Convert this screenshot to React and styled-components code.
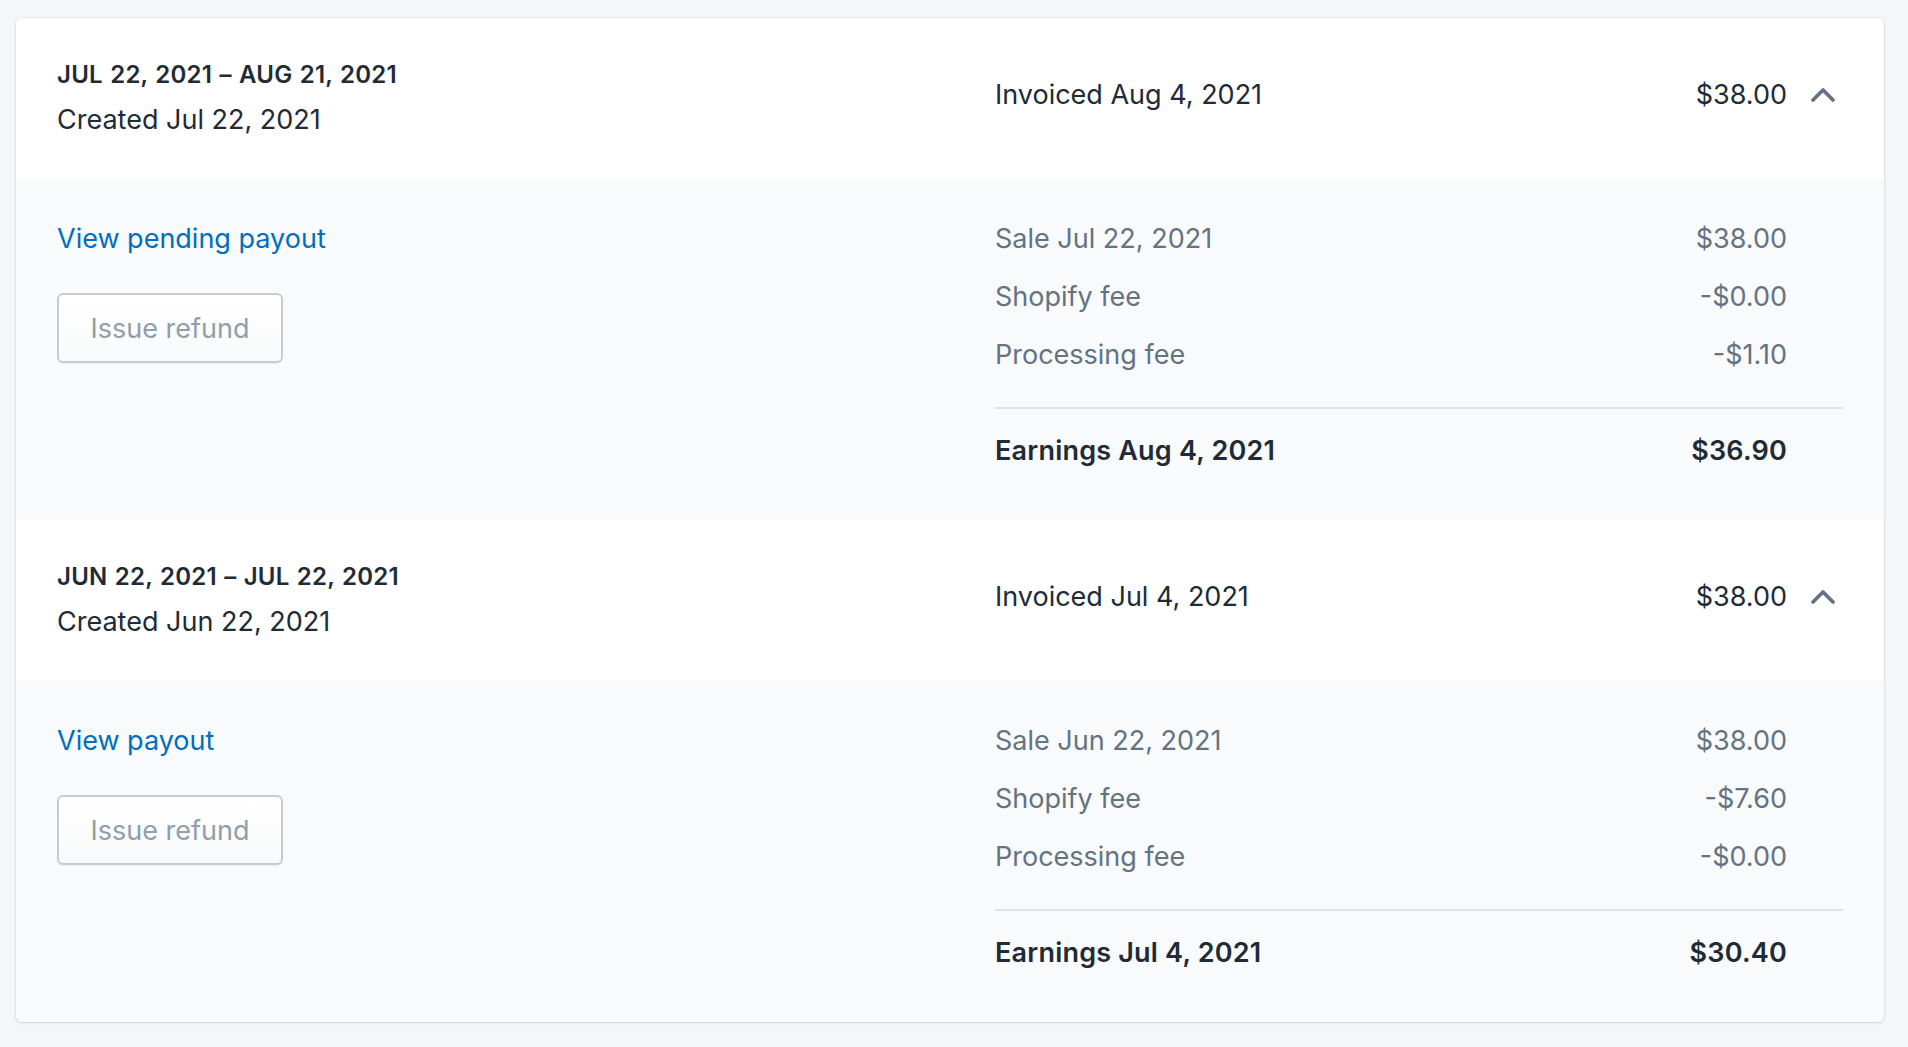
import styled, { createGlobalStyle } from "styled-components";

const GlobalStyle = createGlobalStyle`
  body {
    margin: 0;
    background: #f4f6f8;
    font-family: Inter, "Noto Sans", "Liberation Sans", sans-serif;
    color: #212b36;
  }
`;

const periods = [
  {
    range: "Jul 22, 2021 – Aug 21, 2021",
    created: "Created Jul 22, 2021",
    invoiced: "Invoiced Aug 4, 2021",
    amount: "$38.00",
    link: "View pending payout",
    lines: [
      ["Sale Jul 22, 2021", "$38.00"],
      ["Shopify fee", "-$0.00"],
      ["Processing fee", "-$1.10"],
    ],
    earnings: ["Earnings Aug 4, 2021", "$36.90"],
  },
  {
    range: "Jun 22, 2021 – Jul 22, 2021",
    created: "Created Jun 22, 2021",
    invoiced: "Invoiced Jul 4, 2021",
    amount: "$38.00",
    link: "View payout",
    lines: [
      ["Sale Jun 22, 2021", "$38.00"],
      ["Shopify fee", "-$7.60"],
      ["Processing fee", "-$0.00"],
    ],
    earnings: ["Earnings Jul 4, 2021", "$30.40"],
  },
];

const ChevronUp = () => (
  <svg width="26" height="26" viewBox="0 0 26 26" fill="none">
    <polyline
      points="3,18 13,8 23,18"
      stroke="#637381"
      strokeWidth="3.8"
      strokeLinecap="round"
      strokeLinejoin="round"
    />
  </svg>
);

const App = () => {
  return (
    <Page>
      <GlobalStyle />
      <Card>
        {periods.map((period, index) => (
          <section key={index}>
            <Header>
              <HeaderLeft>
                <RangeLabel>{period.range}</RangeLabel>
                <Created>{period.created}</Created>
              </HeaderLeft>
              <HeaderRight>
                <Invoiced>{period.invoiced}</Invoiced>
                <span>{period.amount}</span>
                <ToggleButton aria-label="Collapse">
                  <ChevronUp />
                </ToggleButton>
              </HeaderRight>
            </Header>
            <Details>
              <DetailLeft>
                <PayoutLink href="#">{period.link}</PayoutLink>
                <RefundButton disabled>Issue refund</RefundButton>
              </DetailLeft>
              <DetailRight>
                {period.lines.map(([label, value]) => (
                  <LineItem key={label}>
                    <span>{label}</span>
                    <span>{value}</span>
                  </LineItem>
                ))}
                <Divider />
                <LineItem $total>
                  <span>{period.earnings[0]}</span>
                  <span>{period.earnings[1]}</span>
                </LineItem>
              </DetailRight>
            </Details>
          </section>
        ))}
      </Card>
    </Page>
  );
};

export default App;

const Page = styled.div`
  padding: 18px 24px 25px 16px;
`;

const Card = styled.div`
  background: #fff;
  border-radius: 6px;
  overflow: hidden;
  box-shadow: 0 0 0 1px rgba(63, 63, 68, 0.05),
    0 1px 3px 0 rgba(63, 63, 68, 0.15);
`;

const Header = styled.div`
  display: grid;
  grid-template-columns: 938px 1fr;
  align-items: center;
  padding: 41px 41px 39px;
  background: #fff;
`;

const HeaderLeft = styled.div`
  display: flex;
  flex-direction: column;
`;

const RangeLabel = styled.div`
  font-size: 24px;
  line-height: 32px;
  font-weight: 600;
  text-transform: uppercase;
  letter-spacing: 0.25px;
  word-spacing: 1px;
`;

const Created = styled.div`
  margin-top: 9px;
  font-size: 27px;
  line-height: 40px;
`;

const HeaderRight = styled.div`
  display: flex;
  align-items: center;
  font-size: 27px;
  line-height: 38px;
  margin-top: -9px;
`;

const Invoiced = styled.span`
  flex: 1;
`;

const ToggleButton = styled.button`
  width: 40px;
  height: 40px;
  margin-left: 16px;
  padding: 0;
  border: 0;
  background: none;
  display: flex;
  align-items: center;
  justify-content: center;
  cursor: pointer;
`;

const Details = styled.div`
  display: grid;
  grid-template-columns: 938px 1fr;
  padding: 41px 41px 50px;
  background: #f9fafb;
`;

const DetailLeft = styled.div`
  display: flex;
  flex-direction: column;
  align-items: flex-start;
`;

const PayoutLink = styled.a`
  color: #006fbb;
  font-size: 27px;
  line-height: 38px;
  text-decoration: none;
`;

const RefundButton = styled.button`
  margin-top: 35px;
  width: 226px;
  height: 70px;
  border: 2px solid #c4cdd5;
  border-radius: 6px;
  background: linear-gradient(180deg, #ffffff, #f9fafb);
  color: #919eab;
  font-family: inherit;
  font-size: 27px;
  box-shadow: 0 1px 1px rgba(22, 29, 37, 0.06);
`;

const DetailRight = styled.div`
  display: flex;
  flex-direction: column;
`;

const LineItem = styled.div`
  display: flex;
  justify-content: space-between;
  padding-right: 56px;
  font-size: 27px;
  line-height: 38px;
  color: ${(props) => (props.$total ? "#212b36" : "#637381")};
  font-weight: ${(props) => (props.$total ? 600 : 400)};
  letter-spacing: ${(props) => (props.$total ? "0.2px" : "0")};
  margin-top: ${(props) => (props.$total ? "23px" : "0")};

  & + & {
    margin-top: 20px;
  }
`;

const Divider = styled.div`
  height: 2px;
  margin-top: 33px;
  background: #dfe3e8;
`;
